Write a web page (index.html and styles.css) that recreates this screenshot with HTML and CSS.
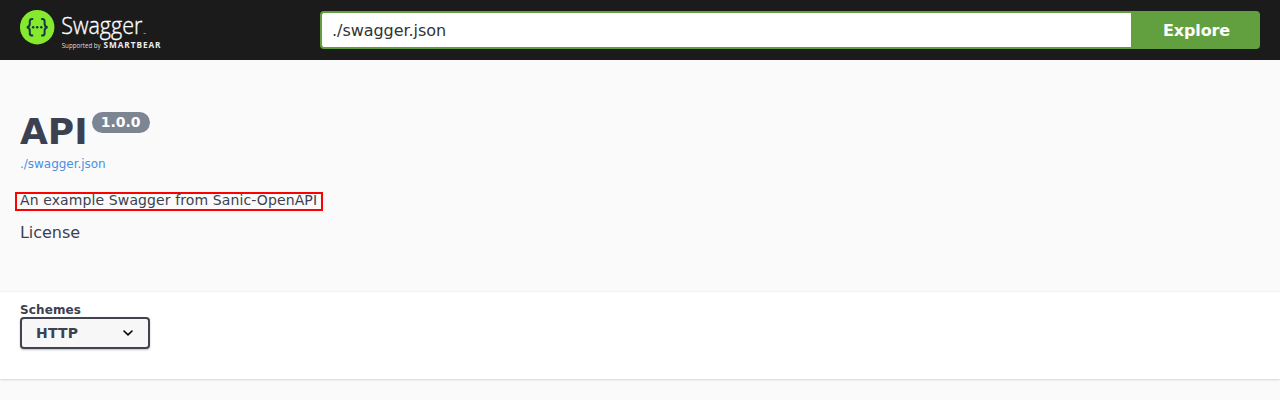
FILE: index.html
```html
<!DOCTYPE html>
<html lang="en">
<head>
<meta charset="utf-8">
<title>Swagger UI</title>
<link rel="stylesheet" href="styles.css">
</head>
<body>
<header class="topbar">
  <a class="logo">
    <svg width="150" height="60" viewBox="0 0 150 60">
      <circle cx="17.2" cy="27.2" r="17.2" fill="#85ea2d"/>
      <g fill="none" stroke="#173647" stroke-width="2">
        <path d="M13.2 18.9h-1c-1.7 0-2.4.8-2.4 2.4v2.5c0 2-.8 3.1-3 3.4 2.2.3 3 1.4 3 3.4v2.6c0 1.6.7 2.4 2.4 2.4h1"/>
        <path d="M21.2 18.9h1c1.7 0 2.4.8 2.4 2.4v2.5c0 2 .8 3.1 3 3.4-2.2.3-3 1.4-3 3.4v2.6c0 1.6-.7 2.4-2.4 2.4h-1"/>
      </g>
      <g fill="#173647">
        <circle cx="13.1" cy="27.2" r="1.25"/><circle cx="17.2" cy="27.2" r="1.25"/><circle cx="21.3" cy="27.2" r="1.25"/>
      </g>
      <text class="logo-name" x="41.3" y="34.2" textLength="81" lengthAdjust="spacingAndGlyphs">Swagger</text>
      <path d="M123.5 33.5h2.5" stroke="#999" stroke-width=".8"/>
      <text class="logo-support" x="41.7" y="48" textLength="39" lengthAdjust="spacingAndGlyphs">Supported by</text>
      <text class="logo-company" x="83.5" y="48" textLength="57" lengthAdjust="spacing">SMARTBEAR</text>
    </svg>
  </a>
  <form class="download">
    <input class="download-input" type="text" value="./swagger.json">
    <button class="download-button" type="button">Explore</button>
  </form>
</header>
<main>
  <section class="info">
    <div class="heading">
      <h1 class="title">API</h1>
      <span class="version">1.0.0</span>
    </div>
    <a class="spec-link">./swagger.json</a>
    <p class="description">An example Swagger from Sanic-OpenAPI</p>
    <div class="license">License</div>
  </section>
  <section class="schemes">
    <div class="schemes-label">Schemes</div>
    <div class="select">
      <span>HTTP</span>
      <svg width="12" height="8" viewBox="0 0 12 8"><path d="M2 2 6 5.8l4-3.8" fill="none" stroke="#000" stroke-width="1.6" stroke-linecap="round" stroke-linejoin="round"/></svg>
    </div>
  </section>
</main>
</body>
</html>
```
FILE: styles.css
```css
* { box-sizing: border-box; }
body {
  margin: 0;
  height: 400px;
  overflow: hidden;
  background: #fafafa;
  color: #3b4151;
  font-family: "DejaVu Sans", sans-serif;
}
.topbar {
  display: flex;
  align-items: center;
  height: 60px;
  padding: 0 20px;
  background: #1b1b1b;
}
.logo { width: 300px; height: 60px; }
.logo svg { display: block; }
.logo-name { font: 300 23px "Open Sans", sans-serif; fill: #fff; stroke: #fff; stroke-width: .35px; }
.logo-support { font: 6.3px "Open Sans", sans-serif; fill: #ddd; }
.logo-company { font: bold 8.2px "Open Sans", sans-serif; fill: #eee; }
.download { display: flex; flex: 1; height: 38px; }
.download-input {
  flex: 1;
  min-width: 0;
  padding: 0 10px;
  border: 2px solid #62a03f;
  border-right: 0;
  border-radius: 4px 0 0 4px;
  outline: 0;
  background: #fff;
  color: #333;
  font: 16px "DejaVu Sans", sans-serif;
  letter-spacing: -.05px;
}
.download-button {
  width: 129px;
  padding: 0 0 0 2px;
  border: 0;
  border-radius: 0 4px 4px 0;
  background: #62a03f;
  color: #fff;
  font: bold 16px "DejaVu Sans", sans-serif;
  letter-spacing: -.1px;
}
.info { height: 232px; padding: 50px 20px 0; }
.heading { display: flex; align-items: flex-start; gap: 4px; height: 45px; }
.title { margin: 0; font-size: 36px; line-height: 44px; }
.version {
  height: 21px;
  margin-top: 2px;
  padding: 0 9px;
  border-radius: 11px;
  background: #7d8492;
  color: #fff;
  font-size: 14px;
  font-weight: bold;
  line-height: 21px;
}
.spec-link { display: block; color: #4990e2; font-size: 12px; line-height: 18px; letter-spacing: -.03px; }
.description {
  width: 308px;
  height: 19px;
  margin: 19px 0 0 -5px;
  padding-left: 3px;
  border: 2px solid #f00;
  font-size: 14px;
  line-height: 12px;
  letter-spacing: .11px;
  white-space: nowrap;
}
.license { margin-top: 12px; font-size: 16px; line-height: 19px; letter-spacing: -.05px; }
.schemes {
  height: 87px;
  padding: 11px 20px 0;
  background: #fff;
  box-shadow: 0 1px 2px rgba(0, 0, 0, .15), 0 -1px 1px rgba(0, 0, 0, .02);
}
.schemes-label { font-size: 12px; font-weight: bold; line-height: 14px; letter-spacing: .12px; }
.select {
  display: flex;
  align-items: center;
  justify-content: space-between;
  width: 130px;
  height: 32px;
  padding: 0 14px;
  border: 2px solid #41444e;
  border-radius: 4px;
  background: #f7f7f7;
  box-shadow: 0 1px 2px rgba(0, 0, 0, .25);
  font-size: 14px;
  font-weight: bold;
  letter-spacing: .2px;
}
```
